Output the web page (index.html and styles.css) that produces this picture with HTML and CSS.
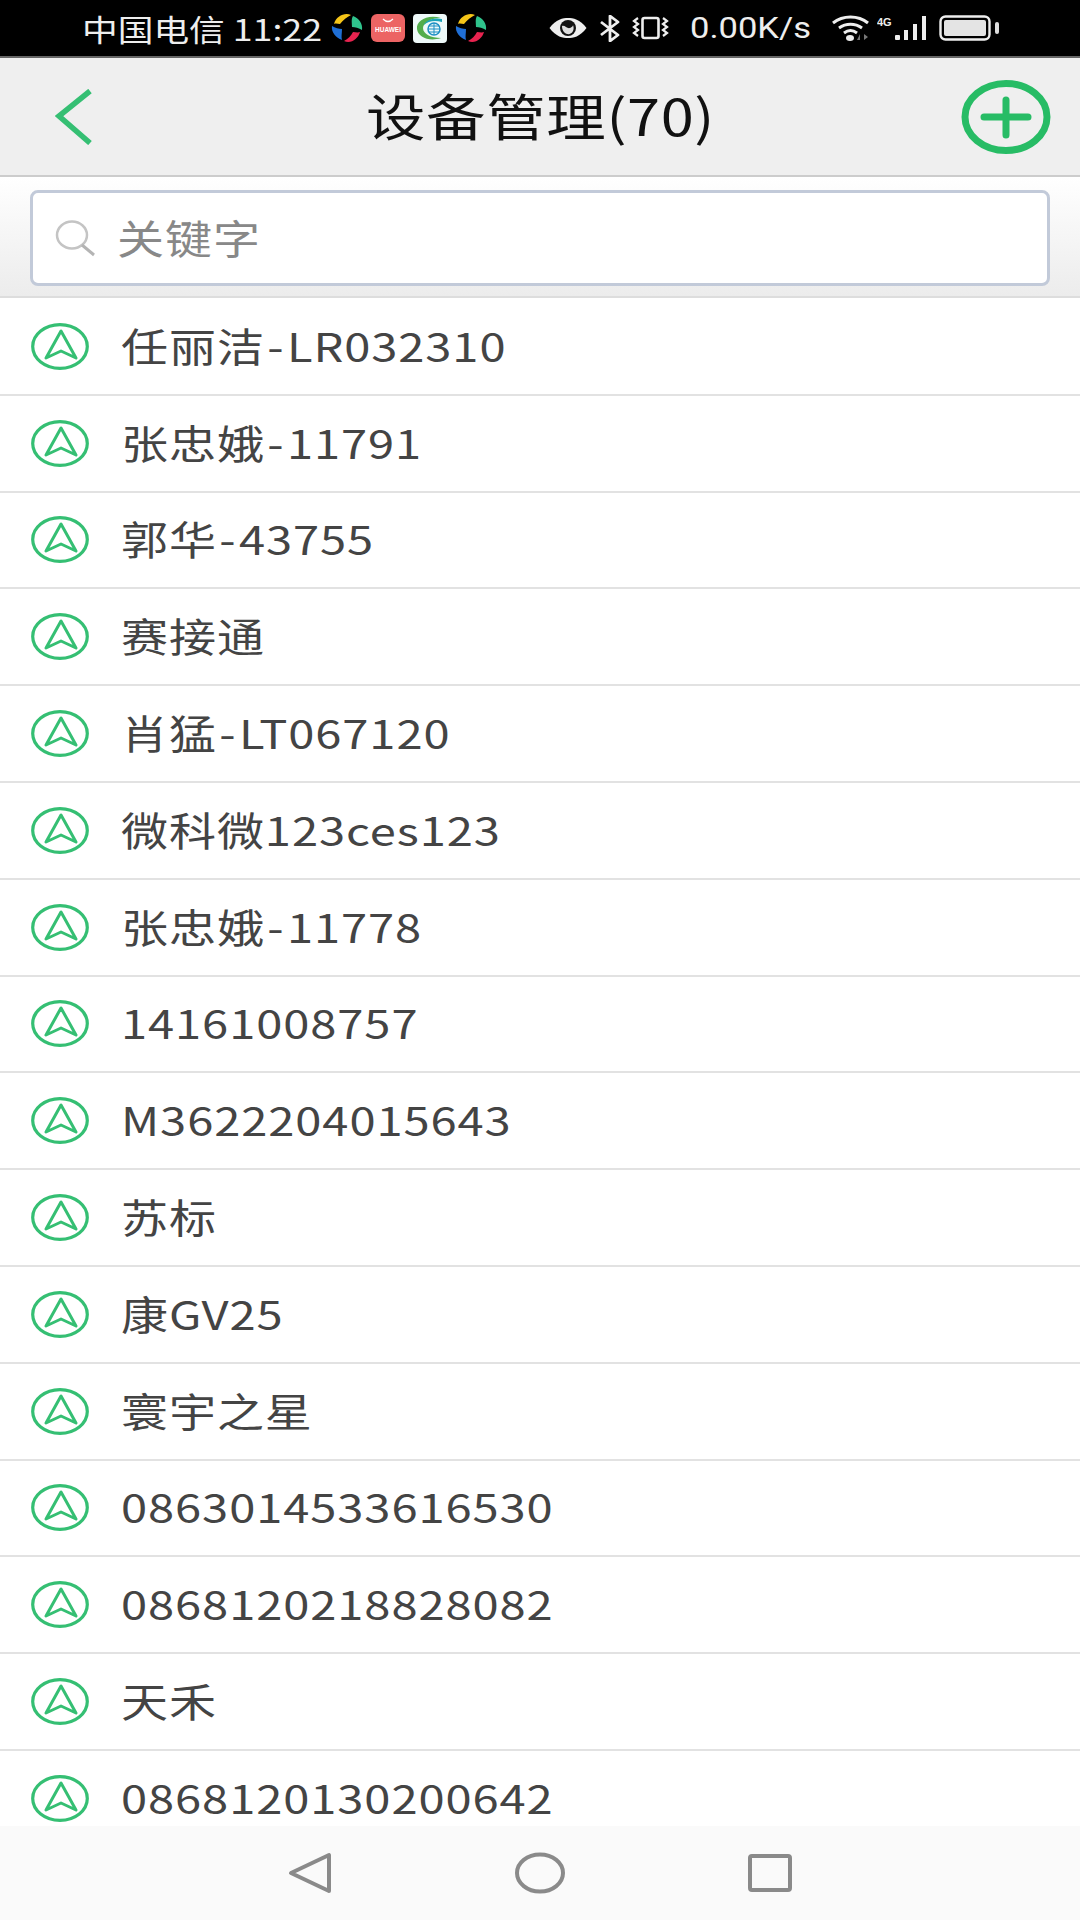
FILE: index.html
```html
<!DOCTYPE html>
<html lang="zh-CN">
  <head>
    <meta charset="UTF-8" />
    <meta name="viewport" content="width=device-width, initial-scale=1.0" />
    <title>设备管理</title>
    <link rel="stylesheet" href="styles.css">
  </head>
  <body>
    <svg class="defs" width="0" height="0">
      <symbol id="pin" viewBox="0 0 58 47">
        <ellipse cx="29" cy="23.500" rx="27.300" ry="21.800" fill="none" stroke="#35bf73" stroke-width="3.200"/>
        <path d="M30 8 L15 35 L30 28 L45 35 Z" fill="none" stroke="#35bf73" stroke-width="3" stroke-linejoin="round"/>
      </symbol>
      <symbol id="wheel" viewBox="0 0 32 32">
        <path d="M3 12 C5 4 14 0 20 3 C16 5 12 8 9 12 C7 12 5 11 3 12Z" fill="#f5c518"/>
        <path d="M22 4 C28 6 32 12 31 18 C28 16 24 15 21 15 C21 11 20 7 22 4Z" fill="#2fc38c"/>
        <path d="M29 20 C27 27 20 32 13 29 C17 27 20 24 22 20 C24 20 27 21 29 20Z" fill="#e8234f"/>
        <path d="M11 28 C5 26 0 20 1 14 C4 16 8 17 11 17 C11 21 10 25 11 28Z" fill="#1f6fd6"/>
      </symbol>
    </svg>

    <div class="status-bar">
      <span class="status-left"><span class="wide">中国电信 11:22</span></span>
      <div class="notify-icons">
        <svg width="32" height="32"><use href="#wheel"/></svg>
        <svg class="app-icon" width="34" height="28" viewBox="0 0 34 28">
          <rect width="34" height="28" rx="6" fill="#ec6464"/>
          <path d="M12 5 Q17 10 22 5" fill="none" stroke="#fff" stroke-width="1.200"/>
          <text x="17" y="18" class="huawei-label">HUAWEI</text>
        </svg>
        <svg class="app-icon" width="34" height="29" viewBox="0 0 34 29">
          <rect width="34" height="29" rx="4" fill="#eef9f9"/>
          <path d="M28 4 C14 0 3 7 4 15 C5 23 16 28 28 24 C18 24 10 20 10 14 C10 9 18 4 28 4Z" fill="#52ad4c"/>
          <path d="M29 5 C20 3 12 7 11 11 C15 7 22 6 29 8Z" fill="#1aa3b8"/>
          <circle cx="21" cy="15" r="6" fill="none" stroke="#1d8fc4" stroke-width="1.500"/>
          <path d="M15 15 H27 M21 9 V21 M16 12 H26 M16 18 H26" stroke="#1d8fc4" stroke-width="1"/>
        </svg>
        <svg width="32" height="32"><use href="#wheel"/></svg>
      </div>
      <div class="system-icons">
        <svg width="40" height="24" viewBox="0 0 40 24">
          <path d="M1.500 12 C8 3 15 2 20 2 C25 2 32 3 38.500 12 C32 21 25 22 20 22 C15 22 8 21 1.500 12Z" fill="#eee"/>
          <circle cx="20" cy="12" r="8" fill="#111"/>
          <path d="M14 10 C17 9 19 13 22 12 C25 11 25 9 25 9 C27 14 24 19 19 18 C16 17 14 14 14 10Z" fill="#ddd"/>
        </svg>
        <svg class="bt-icon" width="22" height="27" viewBox="0 0 22 27">
          <path d="M2 7 L19 20 L11 26 L11 1 L19 7 L2 20" fill="none" stroke="#eee" stroke-width="2.800" stroke-linejoin="round"/>
        </svg>
        <svg class="vib-icon" width="37" height="24" viewBox="0 0 37 24">
          <rect x="10.500" y="2" width="16" height="20" rx="2" fill="none" stroke="#eee" stroke-width="2.600"/>
          <path d="M6 2 L2 5 L6 8 L2 11 L6 14 L2 17 L6 20 M31 2 L35 5 L31 8 L35 11 L31 14 L35 17 L31 20" fill="none" stroke="#eee" stroke-width="2.200"/>
        </svg>
        <span class="speed"><span class="wide">0.00K/s</span></span>
        <svg class="wifi-icon" width="40" height="26" viewBox="0 0 40 26">
          <path d="M2 8 C12 0 27 0 37 8 M8 13 C15 8 24 8 31 13 M13 18 C17 15 22 15 26 18" fill="none" stroke="#eee" stroke-width="3"/>
          <ellipse cx="19" cy="23" rx="4" ry="3" fill="#eee"/>
          <path d="M29 19 L29 25 L26 25Z M33 19 L33 25 L37 22Z" fill="#777"/>
        </svg>
        <svg class="signal-icon" width="54" height="26" viewBox="0 0 54 26">
          <text x="0" y="11" class="net-label">4G</text>
          <rect x="18" y="20" width="5" height="5" rx="1" fill="#eee"/>
          <rect x="27" y="15" width="4" height="10" fill="#eee"/>
          <rect x="36" y="9" width="4" height="16" fill="#eee"/>
          <rect x="45" y="1" width="4" height="24" fill="#eee"/>
        </svg>
        <svg class="battery-icon" width="61" height="26" viewBox="0 0 61 26">
          <rect x="1.500" y="1.500" width="49" height="23" rx="5" fill="none" stroke="#eee" stroke-width="2.400"/>
          <rect x="5" y="5" width="42" height="16" rx="2" fill="#e4e4e4"/>
          <rect x="56" y="7" width="4" height="12" rx="2" fill="#ddd"/>
        </svg>
      </div>
    </div>

    <div class="app-bar">
      <svg class="back" width="38" height="56" viewBox="0 0 38 56">
        <path d="M35 2 L4 27 L35 54" fill="none" stroke="#35bf73" stroke-width="5.500"/>
      </svg>
      <h1 class="title"><span class="wide">设备管理(70)</span></h1>
      <svg class="add" width="90" height="74" viewBox="0 0 90 74">
        <ellipse cx="45" cy="37" rx="41" ry="33.500" fill="none" stroke="#27bc65" stroke-width="7"/>
        <path d="M23 37 H67 M45 20 V55" stroke="#27bc65" stroke-width="7" stroke-linecap="round"/>
      </svg>
    </div>

    <div class="search-bar">
      <div class="search-box">
        <svg width="44" height="40" viewBox="0 0 44 40">
          <ellipse cx="18" cy="17" rx="15" ry="13.500" fill="none" stroke="#c4c4c4" stroke-width="2.500"/>
          <path d="M28 27 L40 37" stroke="#b4b4b4" stroke-width="3"/>
        </svg>
        <span class="placeholder"><span class="wide">关键字</span></span>
      </div>
    </div>

    <ul class="device-list">
      <li class="device"><svg width="58" height="47"><use href="#pin"/></svg><span class="wide">任丽洁<span class="dash">-</span>LR032310</span></li>
      <li class="device"><svg width="58" height="47"><use href="#pin"/></svg><span class="wide">张忠娥<span class="dash">-</span>11791</span></li>
      <li class="device"><svg width="58" height="47"><use href="#pin"/></svg><span class="wide">郭华<span class="dash">-</span>43755</span></li>
      <li class="device"><svg width="58" height="47"><use href="#pin"/></svg><span class="wide">赛接通</span></li>
      <li class="device"><svg width="58" height="47"><use href="#pin"/></svg><span class="wide">肖猛<span class="dash">-</span>LT067120</span></li>
      <li class="device"><svg width="58" height="47"><use href="#pin"/></svg><span class="wide">微科微123ces123</span></li>
      <li class="device"><svg width="58" height="47"><use href="#pin"/></svg><span class="wide">张忠娥<span class="dash">-</span>11778</span></li>
      <li class="device"><svg width="58" height="47"><use href="#pin"/></svg><span class="wide">14161008757</span></li>
      <li class="device"><svg width="58" height="47"><use href="#pin"/></svg><span class="wide">M3622204015643</span></li>
      <li class="device"><svg width="58" height="47"><use href="#pin"/></svg><span class="wide">苏标</span></li>
      <li class="device"><svg width="58" height="47"><use href="#pin"/></svg><span class="wide">康GV25</span></li>
      <li class="device"><svg width="58" height="47"><use href="#pin"/></svg><span class="wide">寰宇之星</span></li>
      <li class="device"><svg width="58" height="47"><use href="#pin"/></svg><span class="wide">0863014533616530</span></li>
      <li class="device"><svg width="58" height="47"><use href="#pin"/></svg><span class="wide">0868120218828082</span></li>
      <li class="device"><svg width="58" height="47"><use href="#pin"/></svg><span class="wide">天禾</span></li>
      <li class="device"><svg width="58" height="47"><use href="#pin"/></svg><span class="wide">0868120130200642</span></li>
    </ul>

    <div class="nav-bar">
      <svg width="44" height="42" viewBox="0 0 44 42">
        <path d="M3 21 L41 3 V39 Z" fill="none" stroke="#8a8a8a" stroke-width="4" stroke-linejoin="round"/>
      </svg>
      <svg width="50" height="42" viewBox="0 0 50 42">
        <ellipse cx="25" cy="21" rx="23" ry="18.500" fill="none" stroke="#8a8a8a" stroke-width="4"/>
      </svg>
      <svg width="46" height="38" viewBox="0 0 46 38">
        <rect x="3" y="2" width="40" height="34" rx="2" fill="none" stroke="#8a8a8a" stroke-width="4"/>
      </svg>
    </div>
  </body>
</html>
```

FILE: styles.css
```css
* {
  box-sizing: border-box;
}
html,
body {
  height: 100%;
}
body {
  margin: 0;
  width: 1080px;
  height: 1920px;
  display: flex;
  flex-direction: column;
  overflow: hidden;
  background-color: #fff;
  font-family: "Noto Sans CJK SC", "Noto Sans", sans-serif;
}
.defs {
  position: absolute;
}
/* the screenshot is stretched sideways, text has to follow */
.wide {
  display: inline-block;
  transform: scaleX(1.19);
  transform-origin: left center;
  white-space: nowrap;
}
.status-bar {
  flex: none;
  height: 58px;
  display: flex;
  align-items: center;
  padding-left: 82px;
  background-color: #000;
  border-bottom: 2px solid #666;
  color: #eee;
}
.status-left {
  width: 249px;
  font-size: 30px;
  line-height: 40px;
}
.notify-icons {
  display: flex;
  align-items: center;
  gap: 8px;
  width: 217px;
}
.huawei-label {
  font-family: "Liberation Sans", sans-serif;
  font-size: 6.500px;
  font-weight: bold;
  fill: #fff;
  text-anchor: middle;
}
.net-label {
  font-family: "Liberation Sans", sans-serif;
  font-size: 11px;
  font-weight: bold;
  fill: #eee;
}
.system-icons {
  display: flex;
  align-items: center;
}
.bt-icon {
  margin-left: 11px;
}
.vib-icon {
  margin-left: 11px;
}
.speed {
  width: 141px;
  margin-left: 21px;
  font-family: "Roboto", sans-serif;
  font-size: 29px;
  line-height: 40px;
}
.signal-icon {
  margin-left: 6px;
}
.battery-icon {
  margin-left: 8px;
}
.app-bar {
  flex: none;
  height: 119px;
  display: flex;
  align-items: center;
  padding: 0 29px 0 55px;
  background-color: #efefef;
  border-bottom: 2px solid #ccc;
}
.title {
  flex: 1;
  margin: 0;
  padding: 0 0 6px 273px;
  font-size: 50px;
  font-weight: 400;
  letter-spacing: 0.500px;
  color: #111;
}
.search-bar {
  flex: none;
  height: 121px;
  padding: 13px 30px 10px 30px;
  background: linear-gradient(#fff, #ececec);
  border-bottom: 2px solid #ddd;
}
.search-box {
  height: 96px;
  display: flex;
  align-items: center;
  gap: 19px;
  padding-left: 21px;
  background-color: #fff;
  border: 3px solid #c2cad9;
  border-radius: 8px;
}
.placeholder {
  padding-bottom: 4px;
  font-size: 39.500px;
  letter-spacing: 0.800px;
  color: #888;
}
.device-list {
  flex: 1;
  margin: 0;
  padding: 1px 0 0;
  list-style: none;
  overflow: hidden;
}
.device {
  height: 96.800px;
  display: flex;
  align-items: center;
  gap: 32px;
  padding-left: 31px;
  border-bottom: 2px solid #e2e2e2;
  font-size: 39.500px;
  letter-spacing: 0.800px;
  color: #444;
}
.device svg {
  flex: none;
}
.device .wide {
  padding-bottom: 4px;
}
.dash {
  margin: 0 2px;
}
.nav-bar {
  flex: none;
  height: 94px;
  display: grid;
  grid-template-columns: repeat(3, 230px);
  justify-content: center;
  justify-items: center;
  align-items: center;
  background-color: #fafafa;
}
```
